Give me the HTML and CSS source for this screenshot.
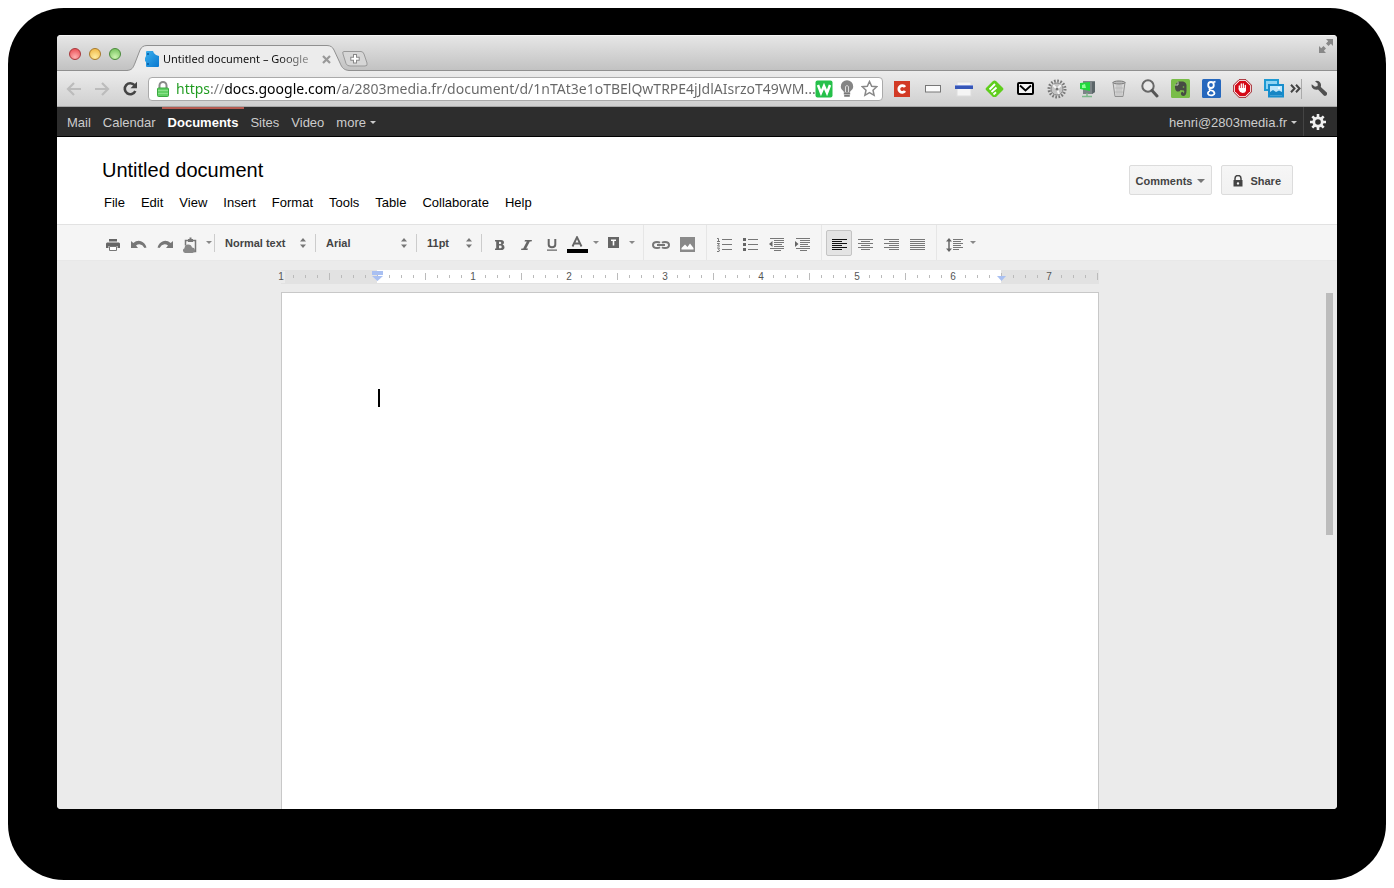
FILE: index.html
```html
<!DOCTYPE html>
<html lang="en">
<head>
<meta charset="utf-8">
<title>Untitled document – Google Docs</title>
<link rel="stylesheet" href="styles.css">
</head>
<body>
<div class="backdrop">
<div class="window">

  <div class="tabstrip">
    <div class="lights">
      <button class="light red" aria-label="Close window"></button>
      <button class="light yellow" aria-label="Minimize window"></button>
      <button class="light green" aria-label="Zoom window"></button>
    </div>
    <div class="tab">
      <svg class="tab-shape" width="222" height="26" viewBox="0 0 222 26" aria-hidden="true">
        <path d="M0 26V25.5C5 25 6 23 8 18L13 5Q15 .5 20 .5H200Q205 .5 207 5L213 18C215 23 217 25 222 25.500V26Z" fill="#ececec"/>
        <path d="M0 25.500C5 25 6 23 8 18L13 5Q15 .5 20 .5H200Q205 .5 207 5L213 18C215 23 217 25 222 25.500" fill="none" stroke="#909090"/>
      </svg>
      <div class="tab-content">
        <svg width="15" height="16" viewBox="0 0 15 16" aria-hidden="true">
          <defs><linearGradient id="fav" x1="0" y1="0" x2="1" y2="1"><stop offset="0" stop-color="#3ab0ee"/><stop offset="1" stop-color="#0b78cf"/></linearGradient></defs>
          <path d="M1 1Q1 0 2 0H8Q9 4 14 5V15Q14 16 13 16H2Q1 16 1 15V11L0 10V7L1 5Z" fill="url(#fav)"/><circle cx="3" cy="3" r="1" fill="#085a9c"/><circle cx="3" cy="13" r="1" fill="#085a9c"/>
        </svg>
        <span class="tab-title">Untitled document – Google</span>
        <button class="tab-close" aria-label="Close tab"><svg width="9" height="9" viewBox="0 0 9 9"><path d="M1 1 8 8M8 1 1 8" stroke="#999" stroke-width="2.200"/></svg></button>
      </div>
    </div>
    <button class="new-tab" aria-label="New tab"><svg width="28" height="18" viewBox="0 0 28 18"><path d="M3 1.500H20Q22 1.500 23 4L26 13Q27 16 24 16H9Q6 16 5 13.500L2 4Q1 1.500 3 1.500Z" fill="#d6d6d6" stroke="#999"/><path d="M14 4V13.500M9.300 8.800H18.700" stroke="#888" stroke-width="4"/><path d="M14 5V12.500M10.300 8.800H17.700" stroke="#fff" stroke-width="2"/></svg></button>
    <button class="fullscreen" aria-label="Full screen"><svg width="16" height="16" viewBox="0 0 16 16" fill="#888"><path d="M8 1H15V8L12.800 5.800 10.500 8 8 5.500 10.200 3.200ZM8 15H1V8L3.200 10.200 5.500 8 8 10.500 5.800 12.800Z"/></svg></button>
  </div>

  <div class="navbar">
    <button class="nav-btn" aria-label="Back"><svg width="16" height="14" viewBox="0 0 16 14" fill="none" stroke="#bcbcbc" stroke-width="2.200"><path d="M8 1 2 7 8 13M2 7H15"/></svg></button>
    <button class="nav-btn" aria-label="Forward"><svg width="16" height="14" viewBox="0 0 16 14" fill="none" stroke="#bcbcbc" stroke-width="2.200"><path d="M8 1 14 7 8 13M14 7H1"/></svg></button>
    <button class="nav-btn" aria-label="Reload"><svg width="16" height="16" viewBox="0 0 16 16"><path d="M12.500 4.200A5.500 5.500 0 1 0 13.300 10" fill="none" stroke="#444" stroke-width="2.600"/><path d="M15 .8V7.300H8.500Z" fill="#444"/></svg></button>
    <div class="omnibox">
      <svg width="12" height="16" viewBox="0 0 12 16" aria-hidden="true"><path d="M2.500 8V4.500a3.500 3.500 0 0 1 7 0V8" fill="none" stroke="#8a8a8a" stroke-width="2"/><rect x=".5" y="7" width="11" height="8.500" rx="1" fill="#62d065" stroke="#3aa840"/><path d="M1 9.500H11M1 12.500H11" stroke="#8ae08a"/></svg>
      <input class="url" type="text" aria-label="Address" value="https://docs.google.com/a/2803media.fr/document/d/1nTAt3e1oTBElQwTRPE4jJdlAIsrzoT49WM...">
      <button aria-label="W extension"><svg width="18" height="18" viewBox="0 0 18 18"><rect x=".5" y=".5" width="17" height="17" rx="2" fill="#25c04a"/><path d="M3 5 6 13 9 6 12 13 15 5" fill="none" stroke="#fff" stroke-width="2.500"/></svg></button>
      <button aria-label="Lightbulb"><svg width="14" height="18" viewBox="0 0 14 18"><path d="M4 12.500C4 10.500 .8 10 .8 6.500a6.200 6.200 0 0 1 12.400 0C13.200 10 10 10.500 10 12.500Z" fill="#858585"/><path d="M3.800 13.500H10.200M4.200 15.800H9.800" stroke="#777" stroke-width="1.800"/><path d="M5.500 12V6.500Q7 4.500 8.500 6.500V12" fill="none" stroke="#ddd"/></svg></button>
      <button aria-label="Bookmark"><svg width="17" height="17" viewBox="0 0 17 17"><path d="M8.500 1.500 10.700 6.200 15.800 6.700 12 10.200 13.100 15.300 8.500 12.600 3.900 15.300 5 10.200 1.200 6.700 6.300 6.200Z" fill="#fff" stroke="#888" stroke-width="1.500"/></svg></button>
    </div>
    <div class="extensions">
      <button aria-label="Clipper"><svg width="16" height="16" viewBox="0 0 16 16"><rect width="16" height="16" fill="#d23a25"/><path d="M11 6A3.400 3.400 0 1 0 11 10" fill="none" stroke="#fff" stroke-width="2.800"/></svg></button>
      <button aria-label="Window resizer"><svg width="16" height="8" viewBox="0 0 16 8"><rect x=".5" y=".5" width="15" height="6.500" fill="#fafafa" stroke="#777"/></svg></button>
      <button aria-label="Page ruler"><svg width="18" height="16" viewBox="0 0 18 16"><rect x="2" y="1" width="14" height="14" fill="#f5f5f5" stroke="#ddd"/><rect y="4" width="18" height="4" fill="#3757b8"/><path d="M0 4.500H18" stroke="#8196db"/></svg></button>
      <button aria-label="Feedly"><svg width="19" height="18" viewBox="0 0 19 18"><path d="M8 1Q9.500 0 11 1L18 8Q19 9 18 10L11 17H8L1 10Q0 9 1 8Z" fill="#5fce1c"/><path d="M4.500 9.500 10 4M6.500 12 11.500 7.500M8.500 14.500 11 12.200" stroke="#fff" stroke-width="1.900"/></svg></button>
      <button aria-label="Mail"><svg width="17" height="13" viewBox="0 0 17 13" fill="#f4f4f4" stroke="#000" stroke-width="2"><rect x="1" y="1" width="15" height="11" rx="1"/><path d="M3 3.500 8.500 8.500 14 3.500" fill="none" stroke-width="1.800"/></svg></button>
      <button aria-label="Gear extension"><svg width="20" height="20" viewBox="0 0 20 20"><circle cx="10" cy="10" r="8" fill="none" stroke="#777" stroke-width="3" stroke-dasharray="1.600 1.540"/><circle cx="10" cy="10" r="6" fill="#c4c4c4" stroke="#888"/><path d="M6 6 10 10 14 6M10 10 12 15" fill="none" stroke="#f4f4f4" stroke-width="2"/><circle cx="10" cy="10" r="1.500" fill="#777"/></svg></button>
      <button aria-label="Computer"><svg width="18" height="18" viewBox="0 0 18 18"><path d="M4 1H16V12L13 14H4Z" fill="#7c8487"/><path d="M13 2H16V12L13 14Z" fill="#5b6568"/><path d="M1 3 11 2V11L1 9Z" fill="#20d83c"/><path d="M3 5 6 4 7 8 3 8Z" fill="#8cff96"/><path d="M8 13V17M3 16.500H13" stroke="#7cb88a" stroke-width="1.500"/></svg></button>
      <button aria-label="Trash"><svg width="14" height="18" viewBox="0 0 14 18"><path d="M1 2.500 3 16.500H11L13 2.500" fill="#d9d9d9" stroke="#909090"/><ellipse cx="7" cy="2.500" rx="6" ry="1.500" fill="#bbb" stroke="#777"/><path d="M5 5V16M7 5V16M9 5V16M3 8H11M3 12H11" stroke="#b5b5b5" stroke-width=".8"/></svg></button>
      <button aria-label="Search"><svg width="18" height="19" viewBox="0 0 18 19"><circle cx="7" cy="7" r="5.700" fill="#e8e8e8" stroke="#686868" stroke-width="2"/><path d="M11 11.500 16 17" stroke="#555" stroke-width="3" stroke-linecap="round"/></svg></button>
      <button aria-label="Evernote"><svg width="19" height="19" viewBox="0 0 19 19"><rect width="19" height="19" rx="1.500" fill="#79bd48"/><path d="M4 6 7 2.500H12Q15 3 15.500 6V12Q15.500 17 12 17 9.500 16.500 10 13.500L12 12.800 12.500 14.500Q14 13 13 11.500L9.500 11Q9 13 6 12.500 3.500 11 4 6Z" fill="#474b44"/><path d="M3.800 6H7V2.600" fill="none" stroke="#dff0d2" stroke-width=".8"/><circle cx="12.500" cy="8" r=".8" fill="#79bd48"/></svg></button>
      <button aria-label="Google search"><svg width="19" height="19" viewBox="0 0 19 19"><rect width="19" height="19" rx="1.500" fill="#2668bd"/><g fill="none" stroke="#fff" stroke-width="1.800"><ellipse cx="9" cy="6" rx="2.800" ry="3"/><path d="M11 3.500 13.500 2.500M9 9Q6.500 10 8 11L11 12Q14 14.500 11 16 9 17 6.800 15.800 4.500 13.500 8 12"/></g></svg></button>
      <button aria-label="AdBlock"><svg width="19" height="19" viewBox="0 0 19 19"><path d="M6 .7H13L18.300 6V13L13 18.300H6L.7 13V6Z" fill="#fff" stroke="#a01820"/><path d="M6.500 2H12.500L17 6.500V12.500L12.500 17H6.500L2 12.500V6.500Z" fill="#d50a18"/><path d="M6.300 10V7M8.300 9V5M10.300 9V5M12.300 10V6.500" stroke="#fff" stroke-width="1.300" stroke-linecap="round"/><path d="M5.800 9H13V11.500Q12.500 14 9.500 14 7 14 5.800 11Z" fill="#fff"/></svg></button>
      <button aria-label="Pictures"><svg width="20" height="19" viewBox="0 0 20 19"><rect x="1" y="1" width="13" height="10" fill="#8fd4f3" stroke="#1d9ad3" stroke-width="2"/><rect x="5" y="6" width="14" height="11.500" fill="#bfe6fa" stroke="#178dcc" stroke-width="2"/><path d="M6 16.500V13L9 11 12 13 15 11.500 18 13V16.500Z" fill="#1686c5"/><circle cx="15" cy="9" r="1" fill="#fff"/></svg></button>
    </div>
    <button class="overflow" aria-label="More extensions"><svg width="11" height="9" viewBox="0 0 11 9" fill="none" stroke="#444" stroke-width="2"><path d="M1 .8 4.500 4.500 1 8.200M6 .8 9.500 4.500 6 8.200"/></svg></button>
    <button class="wrench" aria-label="Settings"><svg width="17" height="17" viewBox="0 0 17 17"><path d="M4 1.200Q7.500 0 9.500 3 10.500 5 9.800 7L16 12.800Q16.500 14.500 15.300 15.500 14 16.300 12.800 15.600L7 9.600Q3 10.500 1 7.500 .3 6 .7 4.300L4 6.800 6.600 6 6.700 3.500Z" fill="#505050"/></svg></button>
  </div>

  <nav class="google-bar">
    <a href="#">Mail</a><a href="#">Calendar</a><a href="#" class="current">Documents</a><a href="#">Sites</a><a href="#">Video</a><a href="#">more<i class="caret"></i></a>
    <a href="#" class="account">henri@2803media.fr<i class="caret"></i></a>
    <button class="gear" aria-label="Options"><svg width="16" height="16" viewBox="0 0 16 16" fill="none" stroke="#eee"><circle cx="8" cy="8" r="4.200" stroke-width="2.800"/><path d="M8 0V4M8 12V16M0 8H4M12 8H16M2.300 2.300 5 5M11 11 13.700 13.700M2.300 13.700 5 11M11 5 13.700 2.300" stroke-width="2.600"/></svg></button>
  </nav>

  <header class="doc-header">
    <div class="doc-main">
      <h1>Untitled document</h1>
      <div class="menus">
        <button>File</button><button>Edit</button><button>View</button><button>Insert</button><button>Format</button><button>Tools</button><button>Table</button><button>Collaborate</button><button>Help</button>
      </div>
    </div>
    <div class="doc-actions">
      <button>Comments<i class="caret big"></i></button>
      <button class="share"><svg width="10" height="12" viewBox="0 0 10 12" aria-hidden="true"><path d="M2 6V3.500a3 3 0 0 1 6 0V6" fill="none" stroke="#444" stroke-width="1.500"/><path d="M.5 5H9.500V11.500H.5ZM5 7.200A1.200 1.200 0 1 0 5 9.600 1.200 1.200 0 1 0 5 7.200Z" fill="#444" fill-rule="evenodd"/></svg>Share</button>
    </div>
  </header>

  <div class="toolbar" role="toolbar" aria-label="Formatting">
    <button class="tool" aria-label="Print"><svg width="14" height="12" viewBox="0 0 14 12"><path d="M3 0H11V2.500H3ZM1 3.500H13L14 4.500V9H11.500V7H2.500V9H0V4.500Z" fill="#666"/><path d="M3.500 7.500H10.500V11.500H3.500Z" fill="#fff" stroke="#777"/></svg></button>
    <button class="tool" aria-label="Undo"><svg width="16" height="9" viewBox="0 0 16 9"><path d="M0 1 2.300 3Q6 0 10 1.200 14 2.500 15.500 7.500L13.500 8Q11.500 4.500 8.500 4.200 6.500 4.200 5 5.500L7 8H0Z" fill="#777"/></svg></button>
    <button class="tool" aria-label="Redo"><svg width="16" height="9" viewBox="0 0 16 9"><path d="M16 1 13.700 3Q10 0 6 1.200 2 2.500 .5 7.500L2.500 8Q4.500 4.500 7.500 4.200 9.500 4.200 11 5.500L9 8H16Z" fill="#777"/></svg></button>
    <button class="tool" aria-label="Web clipboard"><svg width="16" height="16" viewBox="0 0 16 16"><path d="M2.500 8.500V3.500H12.500V14.500H11" fill="none" stroke="#777" stroke-width="1.500"/><path d="M5 2H6.500V.5H8.500V2H10V5H5Z" fill="#777"/><path d="M2.500 16A2.500 2.500 0 0 1 1.500 11.200 3.800 3.800 0 0 1 9 10.500 2.700 2.700 0 0 1 9.500 16Z" fill="#888"/></svg></button>
    <button class="drop" aria-label="Clipboard options"><i class="caret grey"></i></button>
    <span class="rule"></span>
    <label class="picker"><select aria-label="Style"><option>Normal text</option><option>Heading 1</option></select><svg width="6" height="10" viewBox="0 0 6 10"><path d="M0 3.500 3 0 6 3.500ZM0 6.500 3 10 6 6.500Z" fill="#777"/></svg></label>
    <span class="rule"></span>
    <label class="picker"><select aria-label="Font"><option>Arial</option><option>Georgia</option></select><svg width="6" height="10" viewBox="0 0 6 10"><path d="M0 3.500 3 0 6 3.500ZM0 6.500 3 10 6 6.500Z" fill="#777"/></svg></label>
    <span class="rule"></span>
    <label class="picker small"><select aria-label="Font size"><option>11pt</option><option>12pt</option></select><svg width="6" height="10" viewBox="0 0 6 10"><path d="M0 3.500 3 0 6 3.500ZM0 6.500 3 10 6 6.500Z" fill="#777"/></svg></label>
    <span class="rule"></span>
    <div class="group first">
      <button class="tool" aria-label="Bold"><svg width="10" height="10" viewBox="0 0 10 10"><path d="M0 0H6Q9 0 9 2.500 9 4 7.500 4.600 9.500 5.300 9.500 7.200 9.500 10 6 10H0V8.500H1.200V1.500H0ZM4 1.800V4H5.300Q6.300 3.800 6.300 2.900T5.300 1.800ZM4 5.600V8.200H5.500Q6.700 8.200 6.700 6.900T5.500 5.600Z" fill="#666" fill-rule="evenodd"/></svg></button>
      <button class="tool" aria-label="Italic"><svg width="11" height="10" viewBox="0 0 11 10"><path d="M4 0H11L10.500 1.500H8.800L5.200 8.500H7L6.500 10H0L.5 8.500H2.200L5.800 1.500H3.500Z" fill="#666"/></svg></button>
      <button class="tool" aria-label="Underline"><svg width="10" height="12" viewBox="0 0 10 12"><path d="M1.700 0V5.500Q1.700 8.300 5 8.300T8.300 5.500V0" fill="none" stroke="#666" stroke-width="2"/><path d="M0 11.200H10" stroke="#666" stroke-width="1.300"/></svg></button>
      <button class="tool color" aria-label="Text color"><svg width="21" height="17" viewBox="0 0 21 17"><path d="M5.500 10.500 10 1.200 14.500 10.500M7.300 7.500H12.700" fill="none" stroke="#666" stroke-width="1.900"/><path d="M0 13H21V17H0Z" fill="#000"/></svg></button>
      <button class="drop" aria-label="Text color options"><i class="caret grey"></i></button>
      <button class="tool color mark" aria-label="Highlight color"><svg width="11" height="11" viewBox="0 0 11 11"><path d="M0 0H11V11H0Z" fill="#666"/><path d="M3 3.300H8M5.500 3V8.500" stroke="#fff" stroke-width="1.600"/></svg></button>
      <button class="drop" aria-label="Highlight options"><i class="caret grey"></i></button>
    </div>
    <div class="group">
      <button class="tool" aria-label="Insert link"><svg width="18" height="8" viewBox="0 0 18 8" fill="none" stroke="#777" stroke-width="2"><path d="M8 1.800Q7 1 5 1 1 1 1 4T5 7Q7 7 8 6.200M10 1.800Q11 1 13 1 17 1 17 4T13 7Q11 7 10 6.200M5 4H13"/></svg></button>
      <button class="tool" aria-label="Insert image"><svg width="15" height="15" viewBox="0 0 15 15"><rect width="15" height="15" fill="#8a8a8a"/><path d="M1.500 12.500V11L5 7.500 7.500 10 10 6.500 13.500 11V12.500Z" fill="#fff"/></svg></button>
    </div>
    <div class="group">
      <button class="tool" aria-label="Numbered list"><svg width="15" height="15" viewBox="0 0 15 15" stroke="#777" fill="none"><path d="M5 2.500H15M5 7.500H15M5 12.500H15"/><path d="M0 1.500H1.500V4M0 4.500H3M0 6.500H2.500L.5 9H3M0 11H2.500L1.500 12.500 2.500 13 2 14.500H0"/></svg></button>
      <button class="tool" aria-label="Bulleted list"><svg width="15" height="15" viewBox="0 0 15 15"><path d="M5 2.500H15M5 7.500H15M5 12.500H15" stroke="#777"/><path d="M0 1H3V4H0ZM0 6H3V9H0ZM0 11H3V14H0Z" fill="#666"/></svg></button>
      <button class="tool" aria-label="Decrease indent"><svg width="15" height="13" viewBox="0 0 15 13"><path d="M1 .5H15M5 2.500H15M5 4.500H15M5 6.500H13M5 8.500H15M1 10.500H15M5 12.500H12" stroke="#777"/><path d="M3.500 3V9L0 6Z" fill="#666"/></svg></button>
      <button class="tool" aria-label="Increase indent"><svg width="15" height="13" viewBox="0 0 15 13"><path d="M1 .5H15M5 2.500H15M5 4.500H15M5 6.500H13M5 8.500H15M1 10.500H15M5 12.500H12" stroke="#777"/><path d="M0 3V9L3.500 6Z" fill="#666"/></svg></button>
    </div>
    <div class="group">
      <button class="tool active" aria-label="Align left" aria-pressed="true"><svg width="15" height="11" viewBox="0 0 15 11"><path d="M0 .5H15M0 2.500H10M0 4.500H15M0 6.500H10M0 8.500H15M0 10.500H10" stroke="#111"/></svg></button>
      <button class="tool" aria-label="Align center"><svg width="15" height="11" viewBox="0 0 15 11"><path d="M0 .5H15M3 2.500H12M0 4.500H15M3 6.500H12M0 8.500H15M3 10.500H12" stroke="#777"/></svg></button>
      <button class="tool" aria-label="Align right"><svg width="15" height="11" viewBox="0 0 15 11"><path d="M0 .5H15M5 2.500H15M0 4.500H15M5 6.500H15M0 8.500H15M5 10.500H15" stroke="#777"/></svg></button>
      <button class="tool" aria-label="Justify"><svg width="15" height="11" viewBox="0 0 15 11"><path d="M0 .5H15M0 2.500H15M0 4.500H15M0 6.500H15M0 8.500H15M0 10.500H15" stroke="#777"/></svg></button>
    </div>
    <div class="group last">
      <button class="tool" aria-label="Line spacing"><svg width="17" height="14" viewBox="0 0 17 14"><path d="M7 1.500H17M7 3.500H15M7 5.500H17M7 7.500H15M7 9.500H17M7 11.500H13" stroke="#777"/><path d="M3 2V12" stroke="#666" stroke-width="1.500"/><path d="M0 3.500 3 0 6 3.500ZM0 10.500 3 14 6 10.500Z" fill="#666"/></svg></button>
      <button class="drop" aria-label="Line spacing options"><i class="caret grey"></i></button>
    </div>
  </div>

  <main class="canvas">
    <div class="sheet">
      <svg class="ruler" width="828" height="16" viewBox="-10 0 828 16" role="img" aria-label="Ruler">
        <defs>
          <pattern id="ticks" width="48" height="14" patternUnits="userSpaceOnUse">
            <path d="M.5 3V10M12.500 5V8M24.500 5V8M36.500 5V8" stroke="#bbb"/>
          </pattern>
        </defs>
        <path d="M0 0H818V14H0Z" fill="#e2e2e2"/>
        <path d="M96 0H720V13H96Z" fill="#fff"/>
        <path d="M1 0H817V14H1Z" fill="url(#ticks)"/>
        <path d="M-4 1H4V13H-4Z" fill="#ebebeb"/>
        <path d="M184 1h16v12h-16zM280 1h16v12h-16zM376 1h16v12h-16zM472 1h16v12h-16zM568 1h16v12h-16zM664 1h16v12h-16z" fill="#fff"/>
        <path d="M760 1h16v12h-16z" fill="#e2e2e2"/>
        <g class="ruler-labels">
          <text x="0" y="10">1</text><text x="192" y="10">1</text><text x="288" y="10">2</text><text x="384" y="10">3</text><text x="480" y="10">4</text><text x="576" y="10">5</text><text x="672" y="10">6</text><text x="768" y="10">7</text>
        </g>
        <path d="M91 1H102V5H91ZM91 6H102L96.500 11Z" fill="#a9c0f2"/>
        <path d="M716 6H725L720.500 11Z" fill="#a9c0f2"/>
      </svg>
      <div class="page" role="textbox" aria-label="Document" contenteditable="true"><span class="cursor"></span></div>
    </div>
    <div class="scroll"><div class="thumb"></div></div>
  </main>

</div>
</div>
</body>
</html>
```
FILE: styles.css
```css
* { box-sizing: border-box; }
body {
  margin: 0;
  padding: 8px;
  background: #fff;
  font: 13px/16px "Liberation Sans", Arial, sans-serif;
}
button {
  display: flex;
  align-items: center;
  justify-content: center;
  padding: 0;
  border: 0;
  background: none;
  font: inherit;
  color: inherit;
  cursor: pointer;
}
svg { display: block; flex: none; }

.backdrop {
  display: flex;
  min-height: calc(100vh - 16px);
  padding: 27px 49px 71px;
  border-radius: 56px;
  background: #000;
}
.window {
  display: flex;
  flex: 1;
  flex-direction: column;
  min-width: 0;
  overflow: hidden;
  border-radius: 4px;
  background: #ebebeb;
}

/* Browser tabs */
.tabstrip {
  display: flex;
  align-items: flex-end;
  height: 36px;
  padding-left: 12px;
  border-bottom: 1px solid #909090;
  border-top: 1px solid #f4f4f4;
  background: linear-gradient(#e6e6e6, #c2c2c2);
}
.lights { display: flex; gap: 8px; width: 58px; margin-bottom: 10px; }
.light { width: 12px; height: 12px; border: 1px solid; border-radius: 50%; }
.red { border-color: #a8373b; background: radial-gradient(circle at 50% 80%, #ffb0b0, #e8434a); }
.yellow { border-color: #a87a2a; background: radial-gradient(circle at 50% 80%, #ffeca0, #eeb23c); }
.green { border-color: #4a8a3a; background: radial-gradient(circle at 50% 80%, #ccf5b0, #6cbc55); }
.tab { display: grid; width: 222px; margin-bottom: -1px; }
.tab-shape, .tab-content { grid-area: 1 / 1; }
.tab-content { display: flex; align-items: center; min-width: 0; padding: 2px 18px 0 18px; }
.tab-title {
  flex: 1;
  overflow: hidden;
  min-width: 0;
  margin-left: 3px;
  font: 11px/16px "Noto Sans", "Open Sans", sans-serif;
  color: #111;
  white-space: nowrap;
  mask-image: linear-gradient(90deg, #000 115px, #0005 148px);
}
.tab-close { width: 9px; margin-left: 8px; }
.new-tab { margin: 0 auto 2px -8px; }
.fullscreen { align-self: flex-start; margin: 2px 3px 0 0; }

/* Address row */
.navbar {
  display: flex;
  align-items: center;
  height: 36px;
  padding-left: 3px;
  border-bottom: 1px solid #a8a8a8;
  background: linear-gradient(#ececec, #cfcfcf);
}
.nav-btn { width: 28px; height: 28px; }
.omnibox {
  display: flex;
  flex: 1;
  align-items: center;
  gap: 7px;
  min-width: 0;
  height: 24px;
  margin: 0 3px 0 4px;
  padding: 0 4px 0 8px;
  border: 1px solid #aaa;
  border-radius: 4px;
  background: #fff;
}
.url {
  flex: 1;
  min-width: 0;
  margin-right: -7px;
  padding: 0;
  border: 0;
  outline: 0;
  background: linear-gradient(90deg, #1d9a1d 34px, #777 34px 49px, #000 49px 159px, #666 159px);
  background-clip: text;
  color: transparent;
  font: 14px/20px "Noto Sans", "Open Sans", sans-serif;
}
.extensions { display: flex; }
.extensions button { width: 31px; height: 28px; }
.overflow { width: 12px; height: 20px; }
.wrench { width: 36px; height: 20px; border-left: 1px solid #aaa; }

/* Google bar */
.google-bar {
  display: flex;
  height: 30px;
  padding: 0 11px 0 4px;
  border-bottom: 1px solid #000;
  background: #2d2d2d;
  color: #ccc;
}
.google-bar a {
  display: flex;
  align-items: center;
  padding: 0 6px;
  border-top: 2px solid transparent;
  color: inherit;
  text-decoration: none;
}
.google-bar .current { border-color: #b55a50; color: #fff; font-weight: bold; }
.google-bar .account { margin-left: auto; }
.gear { padding-left: 6px; border-left: 1px solid #444; }
.caret {
  width: 0;
  margin-left: 4px;
  border: 3px solid transparent;
  border-top-color: currentColor;
  border-bottom: 0;
}
.caret.big { margin-left: 5px; border-width: 4px 4px 0; color: #777; }
.caret.grey { margin: 0; color: #888; }

/* Document header */
.doc-header {
  display: flex;
  align-items: flex-start;
  justify-content: space-between;
  height: 87px;
  padding: 21px 44px 0 45px;
  background: #fff;
}
h1 { margin: 0; font-size: 20px; font-weight: normal; line-height: 24px; }
.menus { display: flex; gap: 16px; margin: 13px 0 0 2px; }
.doc-actions { display: flex; gap: 9px; margin-top: 7px; }
.doc-actions button {
  height: 30px;
  padding: 2px 6px 0;
  border: 1px solid #dcdcdc;
  border-radius: 2px;
  background: linear-gradient(#f6f6f6, #f1f1f1);
  font-size: 11px;
  font-weight: bold;
  color: #444;
}
.doc-actions .share { gap: 7px; padding: 2px 11px 0; }

/* Formatting toolbar */
.toolbar {
  display: flex;
  align-items: stretch;
  height: 37px;
  padding-left: 43px;
  border-top: 1px solid #e2e2e2;
  border-bottom: 1px solid #e8e8e8;
  background: #f5f5f5;
}
.tool { width: 26px; height: 26px; margin-top: 5px; padding-top: 3px; }
.tool.color { width: 25px; }
.tool.mark { height: 21px; }
.tool.active { border: 1px solid #c4c4c4; border-radius: 2px; background: #e4e4e4; }
.drop { width: 10px; }
.group .drop { width: 11px; }
.rule { width: 1px; height: 18px; margin-top: 9px; background: #ccc; }
.picker { display: flex; align-items: center; width: 100px; padding: 0 9px 0 10px; }
.picker.small { width: 64px; }
.picker select {
  flex: 1;
  min-width: 0;
  padding: 0;
  border: 0;
  appearance: none;
  background: none;
  font: bold 11px/16px "Liberation Sans", Arial, sans-serif;
  color: #444;
}
.group { display: flex; padding: 0 6px 0 4px; border-right: 1px solid #e6e6e6; }
.group.first { padding-left: 5px; }
.group.last { border-right: 0; }

/* Editing area */
.canvas { display: flex; flex: 1; padding-top: 9px; background: #ebebeb; }
.sheet {
  display: flex;
  flex: 1;
  flex-direction: column;
  align-items: center;
  gap: 6px;
  min-width: 0;
}
.ruler { margin-left: -10px; }
.ruler-labels { font-size: 10px; text-anchor: middle; fill: #555; }
.page {
  flex: 1;
  width: 818px;
  max-width: 100%;
  padding: 96px;
  border: 1px solid #c8c8c8;
  border-bottom: 0;
  outline: 0;
  background: #fff;
}
.cursor { display: block; width: 2px; height: 18px; background: #000; }
.scroll { width: 14px; padding-top: 23px; }
.thumb { width: 7px; height: 242px; margin-left: 3px; background: #bcbcbc; }
```
